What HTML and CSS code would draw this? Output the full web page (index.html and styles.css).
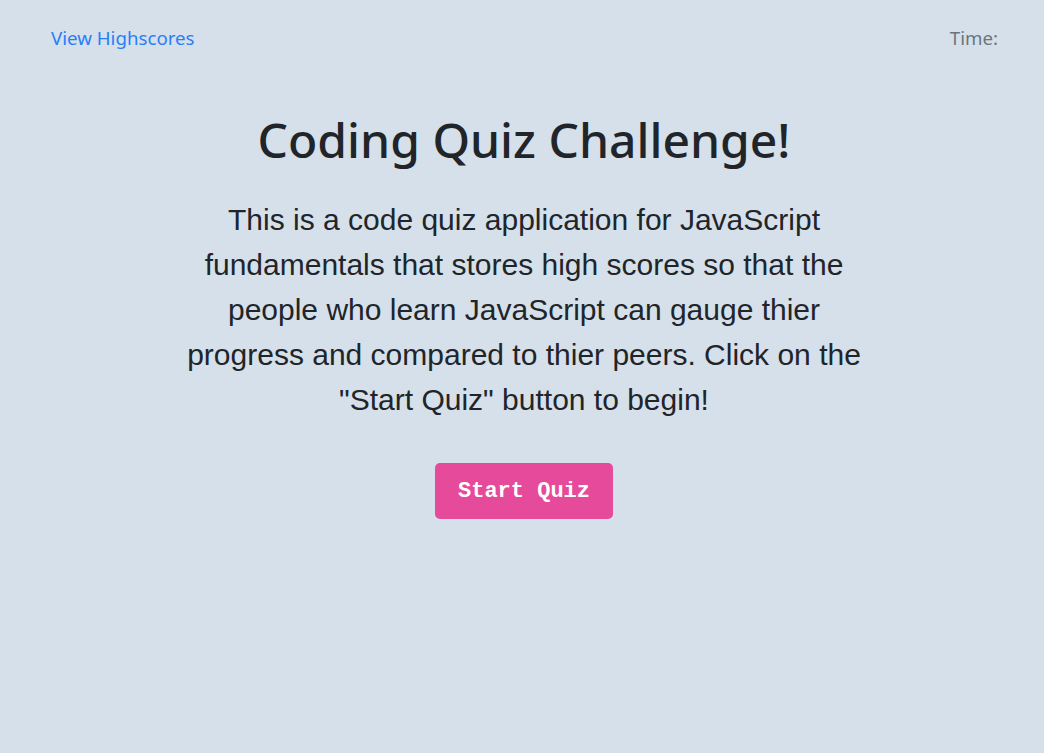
FILE: index.html
```html
<!DOCTYPE html>
<html lang="en">
<head>
<meta charset="utf-8">
<title>Coding Quiz Challenge</title>
<link rel="stylesheet" href="styles.css">
</head>
<body>
<header class="top-bar">
  <a class="highscores-link" href="#">View Highscores</a>
  <span class="timer">Time:</span>
</header>
<main class="intro">
  <h1 class="intro-title">Coding Quiz Challenge!</h1>
  <p class="intro-text">This is a code quiz application for JavaScript fundamentals that stores high scores so that the people who learn JavaScript can gauge thier progress and compared to thier peers. Click on the "Start Quiz" button to begin!</p>
  <button class="start-btn" type="button">Start Quiz</button>
</main>
</body>
</html>
```
FILE: styles.css
```css
html, body {
  margin: 0;
  padding: 0;
}
body {
  background: #d5e0ea;
  color: #212529;
  font-family: "Noto Sans", "Open Sans", sans-serif;
  min-height: 753px;
}
.top-bar {
  display: flex;
  justify-content: space-between;
  align-items: center;
  padding: 25px 46px 0 51px;
  font-size: 18.7px;
  line-height: 26px;
}
.highscores-link {
  color: #2a7ef7;
  text-decoration: none;
}
.timer {
  color: #6c757d;
}
.intro {
  display: flex;
  flex-direction: column;
  align-items: center;
  padding: 60px 0 0 4px;
}
.intro-title {
  margin: 0;
  font-size: 48px;
  font-weight: 500;
  line-height: 58px;
  color: #212529;
}
.intro-text {
  margin: 28px 0 0;
  max-width: 700px;
  text-align: center;
  font-family: "Liberation Sans", Arial, sans-serif;
  font-size: 30px;
  line-height: 45px;
}
.start-btn {
  margin-top: 41px;
  width: 178px;
  height: 56px;
  border: none;
  border-radius: 5px;
  background: #e64a9a;
  color: #fff;
  font-family: "Liberation Mono", "Courier New", monospace;
  font-weight: bold;
  font-size: 22px;
  cursor: pointer;
}
```
